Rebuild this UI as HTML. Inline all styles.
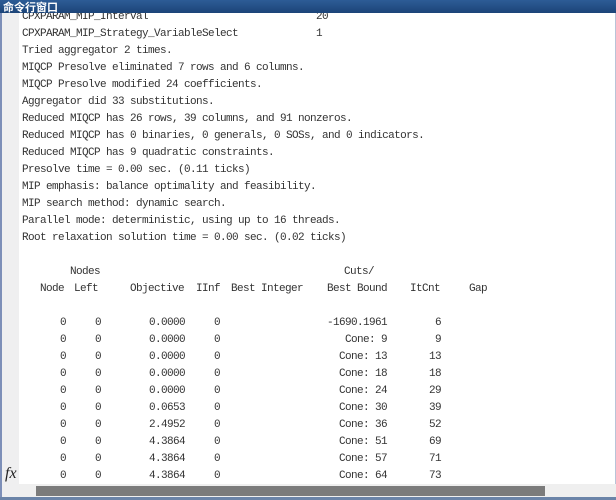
<!DOCTYPE html>
<html><head><meta charset="utf-8"><style>
html,body{margin:0;padding:0;}
body{width:616px;height:500px;position:relative;overflow:hidden;background:#fff;font-family:"Liberation Mono",monospace;}
#title{position:absolute;left:0;top:0;width:616px;height:13px;background:linear-gradient(#2d5c96,#1c4478);z-index:5;}
#title span{position:absolute;left:3px;top:-1px;color:#fff;font:bold 11px "Liberation Sans","Noto Sans CJK SC",sans-serif;}
#lb{position:absolute;left:0;top:13px;width:2px;height:487px;background:#7d8fb8;}
#gut{position:absolute;left:2px;top:13px;width:17px;height:487px;background:#efeff0;}
#c{position:absolute;left:0;top:2px;width:616px;height:480px;}
.l{position:absolute;left:22px;font-size:11px;letter-spacing:-0.6px;color:#333;white-space:pre;line-height:14px;}
.r{position:absolute;font-size:11px;letter-spacing:-0.6px;color:#333;white-space:pre;line-height:14px;text-align:right;}
#track{position:absolute;left:19px;top:484px;width:597px;height:13px;background:#efefef;}
#thumb{position:absolute;left:36px;top:486px;width:509px;height:10px;background:#7b7b7b;}
#bb{position:absolute;left:0;top:497px;width:616px;height:3px;background:#6b84a8;}
#rb{position:absolute;right:0;top:13px;width:1px;height:487px;background:#b8c4d8;}
#fx{position:absolute;left:5px;top:465px;font:italic 16px "Liberation Serif",serif;color:#222;}
</style></head><body>
<div id="lb"></div><div id="gut"></div><div id="rb"></div>
<div id="c">
<div class="l" style="top:8px">CPXPARAM_MIP_Interval                            20</div>
<div class="l" style="top:25px">CPXPARAM_MIP_Strategy_VariableSelect             1</div>
<div class="l" style="top:42px">Tried aggregator 2 times.</div>
<div class="l" style="top:59px">MIQCP Presolve eliminated 7 rows and 6 columns.</div>
<div class="l" style="top:76px">MIQCP Presolve modified 24 coefficients.</div>
<div class="l" style="top:93px">Aggregator did 33 substitutions.</div>
<div class="l" style="top:110px">Reduced MIQCP has 26 rows, 39 columns, and 91 nonzeros.</div>
<div class="l" style="top:127px">Reduced MIQCP has 0 binaries, 0 generals, 0 SOSs, and 0 indicators.</div>
<div class="l" style="top:144px">Reduced MIQCP has 9 quadratic constraints.</div>
<div class="l" style="top:161px">Presolve time = 0.00 sec. (0.11 ticks)</div>
<div class="l" style="top:178px">MIP emphasis: balance optimality and feasibility.</div>
<div class="l" style="top:195px">MIP search method: dynamic search.</div>
<div class="l" style="top:212px">Parallel mode: deterministic, using up to 16 threads.</div>
<div class="l" style="top:229px">Root relaxation solution time = 0.00 sec. (0.02 ticks)</div>
<div class="l" style="top:263px;left:70px">Nodes</div>
<div class="l" style="top:263px;left:344px">Cuts/</div>
<div class="l" style="top:280px;left:40px">Node</div>
<div class="l" style="top:280px;left:74px">Left</div>
<div class="l" style="top:280px;left:130px">Objective</div>
<div class="l" style="top:280px;left:196px">IInf</div>
<div class="l" style="top:280px;left:231px">Best Integer</div>
<div class="l" style="top:280px;left:327px">Best Bound</div>
<div class="l" style="top:280px;left:410px">ItCnt</div>
<div class="l" style="top:280px;left:469px">Gap</div>
<div class="r" style="top:314px;left:0;width:66px">0</div><div class="r" style="top:314px;left:0;width:101px">0</div><div class="r" style="top:314px;left:0;width:185px">0.0000</div><div class="r" style="top:314px;left:0;width:220px">0</div><div class="r" style="top:314px;left:0;width:387px">-1690.1961</div><div class="r" style="top:314px;left:0;width:441px">6</div>
<div class="r" style="top:331px;left:0;width:66px">0</div><div class="r" style="top:331px;left:0;width:101px">0</div><div class="r" style="top:331px;left:0;width:185px">0.0000</div><div class="r" style="top:331px;left:0;width:220px">0</div><div class="r" style="top:331px;left:0;width:387px">Cone: 9</div><div class="r" style="top:331px;left:0;width:441px">9</div>
<div class="r" style="top:348px;left:0;width:66px">0</div><div class="r" style="top:348px;left:0;width:101px">0</div><div class="r" style="top:348px;left:0;width:185px">0.0000</div><div class="r" style="top:348px;left:0;width:220px">0</div><div class="r" style="top:348px;left:0;width:387px">Cone: 13</div><div class="r" style="top:348px;left:0;width:441px">13</div>
<div class="r" style="top:365px;left:0;width:66px">0</div><div class="r" style="top:365px;left:0;width:101px">0</div><div class="r" style="top:365px;left:0;width:185px">0.0000</div><div class="r" style="top:365px;left:0;width:220px">0</div><div class="r" style="top:365px;left:0;width:387px">Cone: 18</div><div class="r" style="top:365px;left:0;width:441px">18</div>
<div class="r" style="top:382px;left:0;width:66px">0</div><div class="r" style="top:382px;left:0;width:101px">0</div><div class="r" style="top:382px;left:0;width:185px">0.0000</div><div class="r" style="top:382px;left:0;width:220px">0</div><div class="r" style="top:382px;left:0;width:387px">Cone: 24</div><div class="r" style="top:382px;left:0;width:441px">29</div>
<div class="r" style="top:399px;left:0;width:66px">0</div><div class="r" style="top:399px;left:0;width:101px">0</div><div class="r" style="top:399px;left:0;width:185px">0.0653</div><div class="r" style="top:399px;left:0;width:220px">0</div><div class="r" style="top:399px;left:0;width:387px">Cone: 30</div><div class="r" style="top:399px;left:0;width:441px">39</div>
<div class="r" style="top:416px;left:0;width:66px">0</div><div class="r" style="top:416px;left:0;width:101px">0</div><div class="r" style="top:416px;left:0;width:185px">2.4952</div><div class="r" style="top:416px;left:0;width:220px">0</div><div class="r" style="top:416px;left:0;width:387px">Cone: 36</div><div class="r" style="top:416px;left:0;width:441px">52</div>
<div class="r" style="top:433px;left:0;width:66px">0</div><div class="r" style="top:433px;left:0;width:101px">0</div><div class="r" style="top:433px;left:0;width:185px">4.3864</div><div class="r" style="top:433px;left:0;width:220px">0</div><div class="r" style="top:433px;left:0;width:387px">Cone: 51</div><div class="r" style="top:433px;left:0;width:441px">69</div>
<div class="r" style="top:450px;left:0;width:66px">0</div><div class="r" style="top:450px;left:0;width:101px">0</div><div class="r" style="top:450px;left:0;width:185px">4.3864</div><div class="r" style="top:450px;left:0;width:220px">0</div><div class="r" style="top:450px;left:0;width:387px">Cone: 57</div><div class="r" style="top:450px;left:0;width:441px">71</div>
<div class="r" style="top:467px;left:0;width:66px">0</div><div class="r" style="top:467px;left:0;width:101px">0</div><div class="r" style="top:467px;left:0;width:185px">4.3864</div><div class="r" style="top:467px;left:0;width:220px">0</div><div class="r" style="top:467px;left:0;width:387px">Cone: 64</div><div class="r" style="top:467px;left:0;width:441px">73</div>
</div>
<div id="title"><span>命令行窗口</span></div>
<div id="track"></div><div id="thumb"></div><div id="bb"></div>
<div id="fx">fx</div>
</body></html>
